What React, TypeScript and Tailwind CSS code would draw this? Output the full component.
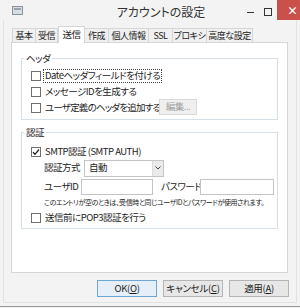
import React from 'react';

const font = "font-['Meiryo_UI','Noto_Sans_CJK_JP',sans-serif] [font-feature-settings:'palt']";

const Check: React.FC<{ checked?: boolean }> = ({ checked }) => (
  <span className="flex h-[10px] w-[10px] shrink-0 items-center justify-center border border-[#6f6f6f] bg-white">
    {checked && (
      <svg width="8" height="8" viewBox="0 0 8 8">
        <path d="M1 4.2 L3 6.3 L7 1.5" fill="none" stroke="#222" strokeWidth="1.3" />
      </svg>
    )}
  </span>
);

const tabs = [
  { label: '基本', w: 'w-[24px]' },
  { label: '受信', w: 'w-[23px]' },
  { label: '送信', w: 'w-[27px]', active: true },
  { label: '作成', w: 'w-[25px]' },
  { label: '個人情報', w: 'w-[41px]' },
  { label: 'SSL', w: 'w-[25px]' },
  { label: 'プロキシ', w: 'w-[35px]' },
  { label: '高度な設定', w: 'w-[47px]' },
];

export default function App() {
  return (
    <div className={`relative h-[308px] w-[300px] overflow-hidden whitespace-nowrap bg-[#f3f3f3] text-[#1b1b1b] ${font}`}>
      {/* title bar */}
      <div className="flex h-[24px] items-start">
        <div className="ml-[12px] mt-[6px] shrink-0">
          <svg width="11" height="9" viewBox="0 0 11 9">
            <rect x="0.5" y="0.5" width="10" height="8" fill="#d8dde3" stroke="#8a929b" />
            <rect x="2" y="2" width="7" height="2" fill="#9aa4ae" />
          </svg>
        </div>
        <div className="ml-[90px] mt-[4px] w-[96px] shrink-0 text-center text-[12px] leading-[16px] text-[#333]">アカウントの設定</div>
        <div className="ml-[38px] mt-[12px] h-[1px] w-[7px] shrink-0 bg-[#333]" />
        <div className="ml-[10px] mt-[8px] h-[8px] w-[8px] shrink-0 border border-[#333]" />
        <div className="ml-[5px] flex h-[20px] w-[31px] shrink-0 items-center justify-center bg-[#c9504b] text-[11px] font-bold text-white">
          ×
        </div>
      </div>

      {/* window border lines */}
      <div className="absolute left-[3px] top-[20px] h-[283px] w-[1px] bg-[#e2e2e2]" />
      <div className="absolute right-[3px] top-[20px] h-[283px] w-[1px] bg-[#e2e2e2]" />
      <div className="absolute bottom-[5px] left-[3px] h-[1px] w-[294px] bg-[#e2e2e2]" />
      <div className="absolute bottom-[1px] left-0 h-[1px] w-[300px] bg-[#9a9a9a]" />

      {/* tabs */}
      <div className="ml-[11px] mt-[2px] flex h-[16px] items-end pl-[2px] tracking-[-0.5px]">
        {tabs.map((t) =>
          t.active ? (
            <div
              key={t.label}
              className={`relative z-10 -mb-[1px] flex h-[17px] ${t.w} shrink-0 items-center justify-center border border-b-0 border-[#d6d6d6] bg-white text-[9.5px] leading-none`}
            >
              {t.label}
            </div>
          ) : (
            <div
              key={t.label}
              className={`-ml-[1px] flex h-[14px] ${t.w} shrink-0 items-center justify-center border border-b-0 border-[#d6d6d6] bg-[#f0f0f0] text-[9px] leading-none text-[#222]`}
            >
              {t.label}
            </div>
          )
        )}
      </div>

      {/* tab panel */}
      <div className="ml-[11px] h-[231px] w-[277px] border border-[#d6d6d6] bg-white pl-[9px] pr-[9px] pt-[15px] text-[9.5px] leading-none tracking-[-0.5px]">
        {/* header group */}
        <div className="relative h-[62px] border border-[#d5dfe5] pl-[9px] pt-[9px]">
          <span className="absolute -top-[7px] left-[2px] bg-white px-[2px] leading-[13px]">ヘッダ</span>
          <div className="flex h-[16px] items-center">
            <Check />
            <span className="ml-[2px] border border-dotted border-[#444] px-[1px] py-[1px]">Dateヘッダフィールドを付ける</span>
          </div>
          <div className="flex h-[16px] items-center">
            <Check />
            <span className="ml-[4px]">メッセージIDを生成する</span>
          </div>
          <div className="flex h-[16px] items-center">
            <Check />
            <span className="ml-[4px] w-[114px] shrink-0 tracking-[-0.8px]">ユーザ定義のヘッダを追加する</span>
            <span className="-mt-[3px] flex h-[16px] w-[38px] shrink-0 items-center justify-center border border-[#d9d9d9] bg-[#efefef] text-[#a0a0a0]">
              編集...
            </span>
          </div>
        </div>

        {/* auth group */}
        <div className="relative mt-[12px] h-[97px] border border-[#d5dfe5] pl-[9px] pt-[11px]">
          <span className="absolute -top-[7px] left-[2px] bg-white px-[2px] leading-[13px]">認証</span>
          <div className="flex h-[15px] items-center">
            <Check checked />
            <span className="ml-[4px]">SMTP認証 (SMTP AUTH)</span>
          </div>
          <div className="flex h-[18px] items-center pl-[13px]">
            <span className="w-[40px] shrink-0">認証方式</span>
            <div className="flex h-[17px] w-[80px] shrink-0 items-center border border-[#c4c4c4] bg-white">
              <span className="flex-1 pl-[4px]">自動</span>
              <span className="flex h-full w-[11px] items-center justify-center border-l border-[#dcdcdc] bg-[#eaeaea]">
                <svg width="6" height="4" viewBox="0 0 6 4">
                  <path d="M0.5 0.5 L3 3 L5.5 0.5" fill="none" stroke="#444" strokeWidth="1" />
                </svg>
              </span>
            </div>
          </div>
          <div className="mt-[2px] flex h-[16px] items-center pl-[13px]">
            <span className="w-[37px] shrink-0">ユーザID</span>
            <span className="h-[16px] w-[72px] shrink-0 border border-[#c4c4c4] bg-white" />
            <span className="ml-[8px] w-[39px] shrink-0">パスワード</span>
            <span className="h-[16px] w-[74px] shrink-0 border border-[#c4c4c4] bg-white" />
          </div>
          <div className="flex h-[15px] items-center pl-[13px] text-[7px] tracking-[-0.4px]">
            このエントリが空のときは、受信時と同じユーザIDとパスワードが使用されます。
          </div>
          <div className="flex h-[15px] items-center">
            <Check />
            <span className="ml-[4px]">送信前にPOP3認証を行う</span>
          </div>
        </div>
      </div>

      {/* buttons */}
      <div className="mt-[7px] flex gap-[6px] pl-[97px] text-[9.5px] leading-none tracking-[-0.3px]">
        <button className="flex h-[17px] w-[60px] shrink-0 items-center justify-center border border-[#6ca6d6] bg-[#e6eff7]">
          OK(<span className="underline">O</span>)
        </button>
        <button className="flex h-[17px] w-[60px] shrink-0 items-center justify-center border border-[#b5b5b5] bg-[#e7e7e7]">
          キャンセル(<span className="underline">C</span>)
        </button>
        <button className="flex h-[17px] w-[60px] shrink-0 items-center justify-center border border-[#b5b5b5] bg-[#e7e7e7]">
          適用(<span className="underline">A</span>)
        </button>
      </div>
    </div>
  );
}
